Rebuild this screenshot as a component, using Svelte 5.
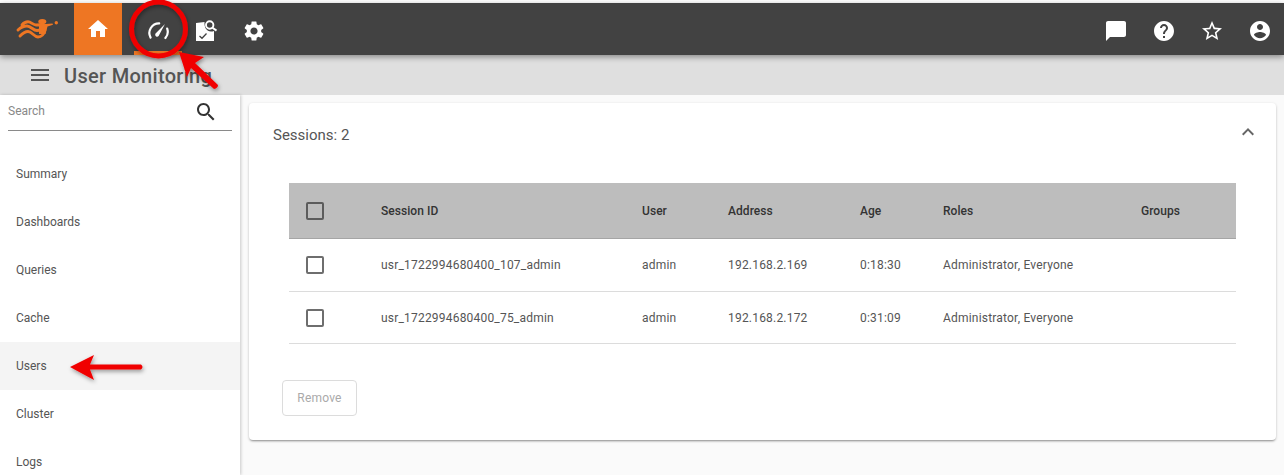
<script>
  const nav = ['Summary', 'Dashboards', 'Queries', 'Cache', 'Users', 'Cluster', 'Logs'];
  const rows = [
    { id: 'usr_1722994680400_107_admin', user: 'admin', addr: '192.168.2.169', age: '0:18:30', roles: 'Administrator, Everyone' },
    { id: 'usr_1722994680400_75_admin', user: 'admin', addr: '192.168.2.172', age: '0:31:09', roles: 'Administrator, Everyone' }
  ];
</script>

<div class="page">
  <header class="topbar">
    <div class="logo">
      <svg width="44" height="24" viewBox="0 0 44 24">
        <g fill="none" stroke="#ee7623" stroke-linecap="round" stroke-width="2.9">
          <path d="M7 8 C9 5.5 11 4.8 13 4.8 C16 4.8 18 8 21 8 C24 8 26 8 28 7.5"/>
          <path d="M3 13 C6 10 9 9 12 9 C16 9 18 13.5 22 13.5 C26 13.5 28 11 30 8.5"/>
          <path d="M5 19 C8 16 10 14.5 13 14.5 C17 14.5 19 20 23 20 C27 20 29 17 30 13"/>
        </g>
        <ellipse cx="27.3" cy="4.6" rx="4" ry="2.6" fill="#ee7623"/>
        <path d="M24 7.5 L37.5 6.5 L38 7.8 L32.5 9.5 L30.5 17 L24 17 Z" fill="#ee7623"/>
        <circle cx="41.3" cy="5.7" r="1.7" fill="#ee7623"/>
      </svg>
    </div>
    <div class="tab active">
      <svg width="24" height="24" viewBox="0 0 24 24"><path fill="#fff" d="M10 20v-6h4v6h5v-8h3L12 3 2 12h3v8z"/></svg>
    </div>
    <div class="tab current">
      <svg width="24" height="24" viewBox="0 0 24 24" fill="none" stroke="#fff" stroke-width="2.2" stroke-linecap="round">
        <path d="M4.6 18.6 A9.6 9.6 0 0 1 13.2 4.4"/>
        <path d="M21.2 9.6 A9.6 9.6 0 0 1 19.4 19"/>
        <path d="M9.6 14.6 L19 5 L12.6 17 A1.9 1.9 0 0 1 9.6 14.6 Z" fill="#fff" stroke="none"/>
      </svg>
    </div>
    <div class="tab shift">
      <svg width="24" height="24" viewBox="0 0 24 24">
        <path fill="#fff" d="M2 4 L10.5 3 C10 8 12.5 12.5 17 12.5 C18 12.5 19 12.4 20 12 V22 H2 Z"/>
        <circle cx="15.7" cy="6" r="3.7" fill="none" stroke="#fff" stroke-width="1.9"/>
        <path d="M18.5 8.8 L22.5 11.6" stroke="#fff" stroke-width="2"/>
        <path d="M5.5 17 L8 19.3 L12.5 14.5" fill="none" stroke="#424242" stroke-width="1.3"/>
      </svg>
    </div>
    <div class="tab shift">
      <svg width="24" height="24" viewBox="0 0 24 24"><path fill="#fff" d="M19.14 12.94c.04-.3.06-.61.06-.94 0-.32-.02-.64-.07-.94l2.03-1.58c.18-.14.23-.41.12-.61l-1.92-3.32c-.12-.22-.37-.29-.59-.22l-2.39.96c-.5-.38-1.03-.7-1.62-.94l-.36-2.54c-.04-.24-.24-.41-.48-.41h-3.84c-.24 0-.43.17-.47.41l-.36 2.54c-.59.24-1.13.57-1.62.94l-2.39-.96c-.22-.08-.47 0-.59.22L2.74 8.87c-.12.21-.08.47.12.61l2.03 1.58c-.05.3-.09.63-.09.94s.02.64.07.94l-2.03 1.58c-.18.14-.23.41-.12.61l1.92 3.32c.12.22.37.29.59.22l2.39-.96c.5.38 1.03.7 1.62.94l.36 2.54c.05.24.24.41.48.41h3.84c.24 0 .44-.17.47-.41l.36-2.54c.59-.24 1.13-.56 1.62-.94l2.39.96c.22.08.47 0 .59-.22l1.92-3.32c.12-.22.07-.47-.12-.61l-2.01-1.58zM12 15.6c-1.98 0-3.6-1.62-3.6-3.6s1.62-3.6 3.6-3.6 3.6 1.62 3.6 3.6-1.62 3.6-3.6 3.6z"/></svg>
    </div>
    <div class="spacer"></div>
    <div class="right-icons">
      <svg width="24" height="24" viewBox="0 0 24 24"><path fill="#fff" d="M20 2H4c-1.1 0-2 .9-2 2v18l4-4h14c1.1 0 2-.9 2-2V4c0-1.1-.9-2-2-2z"/></svg>
      <svg width="24" height="24" viewBox="0 0 24 24"><path fill="#fff" d="M12 2C6.48 2 2 6.48 2 12s4.48 10 10 10 10-4.48 10-10S17.52 2 12 2zm1 17h-2v-2h2v2zm2.07-7.75l-.9.92C13.45 12.9 13 13.5 13 15h-2v-.5c0-1.1.45-2.1 1.17-2.83l1.24-1.26c.37-.36.59-.86.59-1.41 0-1.1-.9-2-2-2s-2 .9-2 2H8c0-2.21 1.79-4 4-4s4 1.79 4 4c0 .88-.36 1.68-.93 2.25z"/></svg>
      <svg width="24" height="24" viewBox="0 0 24 24"><path fill="#fff" d="M22 9.24l-7.19-.62L12 2 9.19 8.63 2 9.24l5.46 4.73L5.82 21 12 17.27 18.18 21l-1.63-7.03L22 9.24zM12 15.4l-3.76 2.27 1-4.28-3.32-2.88 4.38-.38L12 6.1l1.71 4.04 4.38.38-3.32 2.88 1 4.28L12 15.4z"/></svg>
      <svg width="24" height="24" viewBox="0 0 24 24"><path fill="#fff" d="M12 2C6.48 2 2 6.48 2 12s4.48 10 10 10 10-4.48 10-10S17.52 2 12 2zm0 3c1.66 0 3 1.34 3 3s-1.34 3-3 3-3-1.34-3-3 1.34-3 3-3zm0 14.2c-2.5 0-4.71-1.28-6-3.22.03-1.99 4-3.08 6-3.08 1.99 0 5.97 1.09 6 3.08-1.29 1.94-3.5 3.22-6 3.22z"/></svg>
    </div>
  </header>

  <div class="subbar">
    <svg width="24" height="24" viewBox="0 0 24 24"><path fill="#555" d="M3 18h18v-2H3v2zm0-5h18v-2H3v2zm0-7v2h18V6H3z"/></svg>
    <h1>User Monitoring</h1>
  </div>

  <div class="body">
    <aside class="sidebar">
      <div class="search">
        <span>Search</span>
        <svg width="24" height="24" viewBox="0 0 24 24"><path fill="#333" d="M15.5 14h-.79l-.28-.27C15.41 12.59 16 11.11 16 9.5 16 5.91 13.09 3 9.5 3S3 5.91 3 9.5 5.91 16 9.5 16c1.61 0 3.09-.59 4.23-1.57l.27.28v.79l5 4.99L20.49 19l-4.99-5zm-6 0C7.01 14 5 11.99 5 9.5S7.01 5 9.5 5 14 7.01 14 9.5 11.99 14 9.5 14z"/></svg>
      </div>
      <nav>
        {#each nav as item}
          <div class="nav-item" class:selected={item === 'Users'}>{item}</div>
        {/each}
      </nav>
    </aside>

    <main class="content">
      <section class="card">
        <div class="card-head">
          <span>Sessions: 2</span>
          <svg class="chev" width="24" height="24" viewBox="0 0 24 24"><path fill="#666" d="M12 8l-6 6 1.41 1.41L12 10.83l4.59 4.58L18 14z"/></svg>
        </div>
        <div class="table">
          <div class="row head">
            <div class="cell"><i class="check"></i></div>
            <div>Session ID</div><div>User</div><div>Address</div><div>Age</div><div>Roles</div><div>Groups</div>
          </div>
          {#each rows as r}
            <div class="row">
              <div class="cell"><i class="check"></i></div>
              <div>{r.id}</div><div>{r.user}</div><div>{r.addr}</div><div>{r.age}</div><div>{r.roles}</div><div></div>
            </div>
          {/each}
        </div>
        <button class="remove" disabled>Remove</button>
      </section>
    </main>
  </div>

  <svg class="overlay" width="1284" height="475" viewBox="0 0 1284 475">
    <defs>
      <filter id="sh" x="-30%" y="-30%" width="160%" height="160%">
        <feDropShadow dx="1" dy="2" stdDeviation="2" flood-color="#000" flood-opacity="0.4"/>
      </filter>
    </defs>
    <circle cx="158.5" cy="29" r="27" fill="none" stroke="#f00000" stroke-width="5" filter="url(#sh)"/>
    <g filter="url(#sh)" fill="#f00000">
      <path d="M179 52 L204 57 L195 63 L218 85 Q218 88 214 89 L191 68 L187 77 Z"/>
      <path d="M70 367 L94 355 L90 364.5 L141 364.5 Q144 367 141 369.5 L90 369.5 L94 380 Z"/>
    </g>
  </svg>
</div>

<style>
  :global(body) { margin: 0; background: #fff; }
  .page {
    position: relative;
    width: 1284px;
    height: 475px;
    overflow: hidden;
    padding-top: 3px;
    box-sizing: border-box;
    font-family: Roboto, sans-serif;
    color: #555;
    display: flex;
    flex-direction: column;
  }
  .topbar {
    height: 52px;
    background: #424242;
    display: flex;
    align-items: stretch;
    position: relative;
    z-index: 2;
    box-shadow: 0 2px 6px rgba(0,0,0,.4);
    flex: none;
  }
  .logo { width: 74px; display: flex; align-items: center; padding-left: 15px; box-sizing: border-box; }
  .tab { width: 48px; display: flex; align-items: center; justify-content: center; box-sizing: border-box; }
  .tab.active { background: #ee7623; margin-right: 12px; }
  .tab.current { border-bottom: 4px solid #ee7623; padding-top: 8px; }
  .tab.shift { padding-top: 4px; }
  .spacer { flex: 1; }
  .right-icons { display: flex; align-items: center; gap: 24px; padding: 4px 12px 0 0; }
  .subbar {
    height: 40px;
    background: #dfdfdf;
    display: flex;
    align-items: center;
    padding-left: 28px;
    gap: 12px;
    flex: none;
  }
  h1 { margin: 1px 0 0; font-size: 20px; font-weight: 500; color: #555; letter-spacing: .3px; }
  .body { flex: 1; display: flex; min-height: 0; }
  .sidebar {
    width: 240px;
    background: #fff;
    box-shadow: 1px 0 3px rgba(0,0,0,.2);
    flex: none;
    position: relative;
  }
  .search {
    margin: 0 8px;
    height: 36px;
    box-sizing: border-box;
    border-bottom: 1px solid #8a8a8a;
    display: flex;
    align-items: flex-start;
    justify-content: space-between;
    font-size: 12px;
    color: #888;
    padding: 5px 14px 0 0;
  }
  .search span { margin-top: 4px; }
  nav { padding-top: 19px; }
  .nav-item {
    height: 48px;
    display: flex;
    align-items: center;
    padding-left: 16px;
    font-size: 12px;
    color: #555;
  }
  .nav-item.selected { background: #f4f4f4; }
  .content { flex: 1; background: #fafafa; padding: 8px 8px 0 9px; min-width: 0; }
  .card {
    height: 337px;
    background: #fff;
    border-radius: 4px;
    box-shadow: 0 2px 2px -1px rgba(0,0,0,.3), 0 1px 3px rgba(0,0,0,.2);
    box-sizing: border-box;
  }
  .card-head {
    height: 64px;
    padding: 0 16px 0 24px;
    display: flex;
    align-items: center;
    justify-content: space-between;
    font-size: 15px;
    color: #555;
  }
  .chev { margin-bottom: 6px; }
  .table { margin: 16px 40px 0; font-size: 12px; color: #555; letter-spacing: .2px; }
  .row {
    display: grid;
    grid-template-columns: 92px 261px 86px 132px 83px 198px 95px;
    align-items: center;
    height: 52px;
    border-bottom: 1px solid #dcdcdc;
  }
  .row:last-child { height: 51px; }
  .row.head {
    height: 55px;
    background: #bdbdbd;
    font-weight: 500;
    color: #333;
    letter-spacing: .05px;
    border-bottom: 1px solid #a5a5a5;
  }
  .row.head .check { border-color: #5c5c5c; }
  .cell { padding-left: 17px; display: flex; }
  .check {
    width: 14px;
    height: 14px;
    border: 2px solid #6e6e6e;
    border-radius: 2px;
    display: block;
  }
  .remove {
    display: block;
    margin: 36px 0 0 33px;
    width: 75px;
    height: 36px;
    border: 1px solid #dcdcdc;
    border-radius: 4px;
    background: #fff;
    color: #aaa;
    font: 12px Roboto, sans-serif;
    letter-spacing: .2px;
  }
  .overlay { position: absolute; left: 0; top: 0; pointer-events: none; z-index: 5; }
</style>
